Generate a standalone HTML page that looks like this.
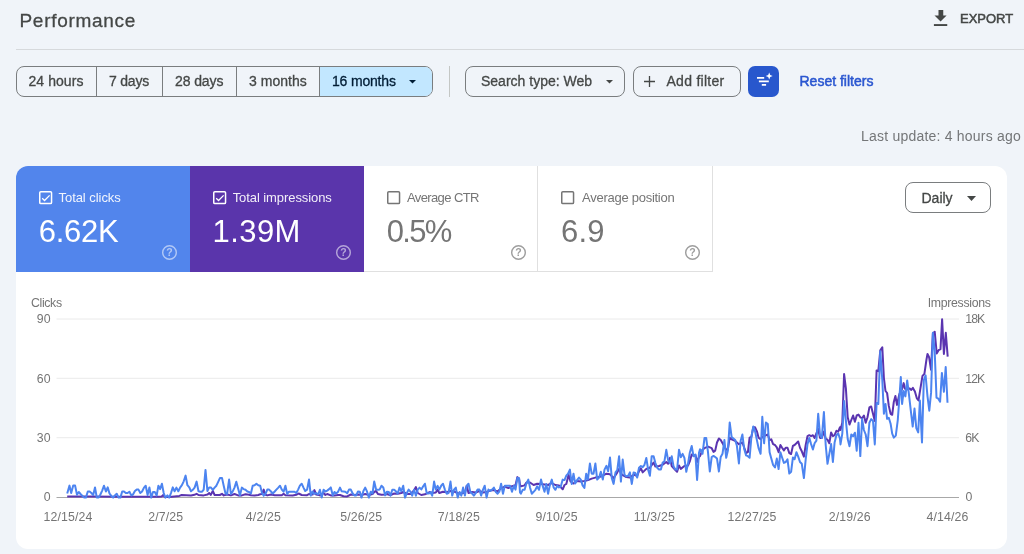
<!DOCTYPE html>
<html lang="en">
<head>
<meta charset="utf-8">
<title>Performance</title>
<style>
*{box-sizing:border-box;margin:0;padding:0}
html,body{width:1024px;height:554px;overflow:hidden}
body{background:#f0f4f9;will-change:transform;font-family:"Liberation Sans",sans-serif;color:#444746;position:relative}
.abs{position:absolute}
.title{left:19.500px;top:9px;font-size:19px;line-height:24px;color:#444746;letter-spacing:0.7px}
.export{left:960px;top:10px;font-size:13px;line-height:18px;color:#444746;letter-spacing:0px}
.hr{left:15.500px;top:49px;width:1008px;height:1px;background:#d6d9dc}
.seg{left:15.500px;top:66px;height:31px;width:417.800px;border:1px solid #7a7d7f;border-radius:8px;overflow:hidden;display:flex;background:#f0f4f9}
.seg div{height:100%;border-right:1px solid #7a7d7f;font-size:14px;line-height:29px;text-align:center;color:#444746;white-space:nowrap}
.seg div:last-child{border-right:none;background:#c2e7ff;color:#001d35}
.btn{top:66px;height:31px;border:1px solid #7a7d7f;border-radius:8px;font-size:14px;line-height:29px;color:#444746;white-space:nowrap}
.vsep{left:449px;top:66px;width:1px;height:31px;background:#c4c7c5}
.bluebtn{left:748px;top:66px;width:31.400px;height:31px;border-radius:7px;background:#2857cd}
.reset{left:799.5px;top:72px;font-size:14px;line-height:18px;color:#2a56d0}
.last{right:3px;top:126.500px;font-size:14px;line-height:18px;color:#747678;white-space:nowrap;letter-spacing:0.21px}
.card{left:15.500px;top:166px;width:991.200px;height:383px;background:#fff;border-radius:12px;overflow:hidden}
.tile{top:0;width:174.200px;height:106px}
.tile .lbl{position:absolute;left:43px;top:24px;font-size:13px;line-height:16px;white-space:nowrap}
.tile .val{position:absolute;left:22.800px;top:48px;font-size:31px;line-height:36px;white-space:nowrap;letter-spacing:-0.6px}
.tile .cb{position:absolute;left:23.300px;top:24.800px}
.t1{left:0;background:#5285ec;color:#fff}
.t1 .lbl,.t2 .lbl{opacity:.92}
.t2{left:174.200px;background:#5a35ab;color:#fff}
.t3{left:348.400px;color:#757575;border-right:1px solid #e0e0e0;border-bottom:1px solid #e0e0e0}
.t4{left:522.600px;width:175.200px;color:#757575;border-right:1px solid #e0e0e0;border-bottom:1px solid #e0e0e0}
.help{position:absolute;left:145.800px;top:77.800px;opacity:.55}
.t3 .help,.t4 .help{opacity:1;color:#9e9e9e}
.daily{left:889px;top:16px;width:86px;height:31px;padding-top:0.700px;border:1px solid #7a7d7f;border-radius:8px;font-size:14px;line-height:29px;color:#444746;padding-left:16px}
svg text{font-family:"Liberation Sans",sans-serif}
.title,.seg div,.btn,.daily{-webkit-text-stroke:0.3px currentColor}
.export,.reset{-webkit-text-stroke:0.5px currentColor}
</style>
</head>
<body>
<div class="abs title">Performance</div>
<svg class="abs" style="left:932px;top:8px" width="18" height="20" viewBox="0 0 18 20"><path d="M6.500 2h4.750v5.600h3.350L8.550 13.500 2.500 7.600h4z" fill="#444746"/><rect x="1.900" y="16.100" width="13.350" height="1.900" fill="#444746"/></svg>
<div class="abs export">EXPORT</div>
<div class="abs hr"></div>

<div class="abs seg">
  <div style="width:80px;letter-spacing:0.08px">24 hours</div>
  <div style="width:66px;letter-spacing:-0.2px">7 days</div>
  <div style="width:74.300px;letter-spacing:-0.1px">28 days</div>
  <div style="width:83.200px;letter-spacing:0.05px">3 months</div>
  <div style="width:112.300px;text-align:left;padding-left:12px;letter-spacing:-0.18px">16 months</div>
</div>
<svg class="abs" style="left:409.400px;top:79.500px" width="7" height="4" viewBox="0 0 7 4"><path d="M0 0h7L3.500 3.600z" fill="#001d35"/></svg>
<div class="abs vsep"></div>
<div class="abs btn" style="left:464.500px;width:160.500px;padding-left:15.500px">Search type: Web</div>
<svg class="abs" style="left:605.500px;top:79.500px" width="7" height="4" viewBox="0 0 7 4"><path d="M0 0h7L3.500 3.600z" fill="#444746"/></svg>
<div class="abs btn" style="left:633px;width:107.500px;padding-left:32.500px;letter-spacing:0.27px">Add filter</div>
<svg class="abs" style="left:643px;top:75px" width="13" height="13" viewBox="0 0 13 13"><path d="M6.500 1v11M1 6.500h11" stroke="#444746" stroke-width="1.300" fill="none"/></svg>
<div class="abs bluebtn"></div>
<svg class="abs" style="left:748px;top:66px" width="31" height="31" viewBox="0 0 31 31"><path d="M9 11.800h7.200M10.900 15.400h9.900M13.800 18.800h4.300" stroke="#fff" stroke-width="1.700" fill="none"/><path d="M21.200 6.600l1 2.500 2.500 1-2.500 1-1 2.500-1-2.500-2.500-1 2.500-1z" fill="#fff"/></svg>
<div class="abs reset">Reset filters</div>
<div class="abs last">Last update: 4 hours ago</div>

<div class="abs card">
  <div class="abs tile t1"><svg class="cb" width="14" height="14" viewBox="0 0 14 14"><rect x=".75" y=".75" width="11.800" height="11.800" rx="1.100" fill="none" stroke="currentColor" stroke-width="1.500"/><path d="M3.200 7.300l2.350 2.200 5.050-5.100" fill="none" stroke="currentColor" stroke-width="1.300"/></svg><span class="lbl" style="letter-spacing:-0.05px">Total clicks</span><span class="val" style="letter-spacing:-0.3px;left:23.300px">6.62K</span><svg class="help" width="17" height="17" viewBox="0 0 17 17"><circle cx="8.500" cy="8.500" r="6.800" fill="none" stroke="currentColor" stroke-width="1.400"/><text x="8.500" y="12.300" text-anchor="middle" font-size="10.500" font-weight="bold" fill="currentColor">?</text></svg></div>
  <div class="abs tile t2"><svg class="cb" width="14" height="14" viewBox="0 0 14 14"><rect x=".75" y=".75" width="11.800" height="11.800" rx="1.100" fill="none" stroke="currentColor" stroke-width="1.500"/><path d="M3.200 7.300l2.350 2.200 5.050-5.100" fill="none" stroke="currentColor" stroke-width="1.300"/></svg><span class="lbl" style="letter-spacing:-0.08px">Total impressions</span><span class="val" style="letter-spacing:0.45px">1.39M</span><svg class="help" width="17" height="17" viewBox="0 0 17 17"><circle cx="8.500" cy="8.500" r="6.800" fill="none" stroke="currentColor" stroke-width="1.400"/><text x="8.500" y="12.300" text-anchor="middle" font-size="10.500" font-weight="bold" fill="currentColor">?</text></svg></div>
  <div class="abs tile t3"><svg class="cb" width="14" height="14" viewBox="0 0 14 14"><rect x=".75" y=".75" width="11.800" height="11.800" rx="1.100" fill="none" stroke="currentColor" stroke-width="1.500"/></svg><span class="lbl" style="letter-spacing:-0.6px">Average CTR</span><span class="val" style="letter-spacing:-1.7px">0.5%</span><svg class="help" width="17" height="17" viewBox="0 0 17 17"><circle cx="8.500" cy="8.500" r="6.800" fill="none" stroke="currentColor" stroke-width="1.400"/><text x="8.500" y="12.300" text-anchor="middle" font-size="10.500" font-weight="bold" fill="currentColor">?</text></svg></div>
  <div class="abs tile t4"><svg class="cb" width="14" height="14" viewBox="0 0 14 14"><rect x=".75" y=".75" width="11.800" height="11.800" rx="1.100" fill="none" stroke="currentColor" stroke-width="1.500"/></svg><span class="lbl" style="letter-spacing:-0.27px;left:44px">Average position</span><span class="val" style="letter-spacing:0.3px">6.9</span><svg class="help" width="17" height="17" viewBox="0 0 17 17"><circle cx="8.500" cy="8.500" r="6.800" fill="none" stroke="currentColor" stroke-width="1.400"/><text x="8.500" y="12.300" text-anchor="middle" font-size="10.500" font-weight="bold" fill="currentColor">?</text></svg></div>
  <div class="abs daily">Daily</div>
  <svg class="abs" style="left:951px;top:29.500px" width="9" height="5" viewBox="0 0 9 5"><path d="M0 0h9L4.500 5z" fill="#444746"/></svg>
  <svg id="chart" class="abs" style="left:0.500px;top:106px" width="991" height="277" viewBox="16 272 991 277">
    <g stroke="#eaeaea" stroke-width="1">
      <line x1="56.500" x2="959" y1="319" y2="319"/>
      <line x1="56.500" x2="959" y1="378.300" y2="378.300"/>
      <line x1="56.500" x2="959" y1="437.700" y2="437.700"/>
    </g>
    <line x1="56.500" x2="959" y1="497.500" y2="497.500" stroke="#a8a8a8" stroke-width="1"/>
    <g font-size="12.300" fill="#757575">
      <text x="31" y="306.800" letter-spacing="-0.35">Clicks</text>
      <text x="990.700" y="306.800" text-anchor="end" letter-spacing="-0.3">Impressions</text>
      <g text-anchor="end">
        <text x="50.500" y="323.200">90</text>
        <text x="50.500" y="382.500">60</text>
        <text x="50.500" y="441.900">30</text>
        <text x="50.500" y="501.200">0</text>
      </g>
      <text x="965.200" y="323.200" letter-spacing="-0.9">18K</text>
      <text x="965.200" y="382.500" letter-spacing="-0.9">12K</text>
      <text x="965.200" y="441.900" letter-spacing="-0.9">6K</text>
      <text x="965.500" y="501.200">0</text>
      <g text-anchor="middle" letter-spacing="0.15">
        <text x="68" y="521.300">12/15/24</text>
        <text x="165.700" y="521.300">2/7/25</text>
        <text x="263.400" y="521.300">4/2/25</text>
        <text x="361.200" y="521.300">5/26/25</text>
        <text x="458.900" y="521.300">7/18/25</text>
        <text x="556.600" y="521.300">9/10/25</text>
        <text x="654.300" y="521.300">11/3/25</text>
        <text x="752" y="521.300">12/27/25</text>
        <text x="849.800" y="521.300">2/19/26</text>
        <text x="947.500" y="521.300">4/14/26</text>
      </g>
    </g>
    <polyline fill="none" stroke="#5a34b0" stroke-width="2" stroke-linejoin="round" stroke-linecap="butt" points="67.2,496.6 89.3,496.6 118.6,496.7 158.4,496.7 161.7,496.4 163.2,495.0 164.6,496.9 169.5,496.9 179.3,495.9 181.7,495.0 191.0,495.4 194.4,494.8 196.6,493.8 198.5,495.0 203.7,495.4 207.6,494.5 209.2,493.0 210.7,495.0 212.8,491.0 214.6,495.0 219.8,495.0 222.0,493.8 223.7,495.4 227.1,494.5 230.9,495.4 234.5,494.0 238.1,495.4 241.8,495.4 245.5,494.3 249.1,494.7 250.9,495.2 254.6,495.4 258.3,495.0 260.2,494.3 262.0,494.0 263.7,489.6 264.9,494.5 267.3,495.4 271.0,494.5 274.7,495.2 281.8,495.2 283.6,493.8 285.4,495.2 292.7,495.4 296.3,494.8 298.6,493.5 301.7,495.0 307.1,495.2 309.0,494.0 312.6,494.5 314.4,490.1 316.2,494.5 319.9,495.4 323.6,493.0 325.4,495.0 327.2,494.0 330.8,495.4 334.5,495.6 338.1,495.0 340.0,495.0 343.5,496.2 347.2,496.4 350.8,494.5 354.4,495.0 358.0,494.5 361.5,495.0 365.2,494.0 368.9,495.0 372.5,494.0 374.2,492.0 376.1,491.0 377.9,494.0 381.5,494.8 385.2,494.5 386.9,494.0 390.5,495.2 394.2,493.5 397.7,493.7 401.3,493.0 403.2,492.0 406.9,494.0 410.4,494.0 414.0,490.6 415.9,487.1 417.7,493.0 421.3,495.0 424.9,494.3 430.0,492.0 432.2,493.0 435.8,492.5 437.6,489.6 439.3,493.0 443.0,491.7 446.7,492.3 450.5,491.0 454.0,491.5 457.7,493.0 461.3,493.5 464.9,492.5 466.7,485.7 468.5,493.0 472.1,492.0 475.7,492.5 479.4,491.0 483.0,492.5 486.6,492.0 490.3,490.6 493.9,490.1 497.6,491.5 501.1,488.1 504.8,486.6 508.4,488.1 512.0,486.2 515.5,485.2 517.4,477.1 519.1,478.8 520.0,484.7 520.9,486.4 524.6,485.4 526.4,482.5 530.0,482.5 533.6,485.0 537.1,483.7 541.0,484.0 544.5,484.5 548.1,485.0 551.8,483.0 555.4,485.0 559.0,485.4 562.7,489.3 564.5,485.0 566.3,484.0 568.6,474.7 570.5,481.5 573.5,483.5 577.1,481.0 580.8,481.5 584.4,481.0 588.1,480.1 591.7,478.6 595.4,477.6 599.1,477.1 602.8,475.7 606.4,473.7 610.0,474.2 613.6,478.1 617.3,472.4 619.1,468.9 620.9,473.5 622.7,475.2 626.3,477.0 629.9,477.5 633.6,474.7 637.2,475.8 639.0,471.2 640.9,468.3 642.7,472.4 646.3,468.9 649.9,467.7 653.6,462.5 655.4,466.6 659.0,466.0 662.7,464.8 666.3,462.0 668.1,463.7 670.0,457.9 671.7,466.0 675.4,470.0 677.1,471.8 679.0,465.4 680.8,468.9 684.4,466.0 688.1,465.4 689.8,461.4 691.7,454.5 693.5,455.6 695.4,455.0 697.1,462.0 699.0,456.8 700.0,456.2 702.5,449.8 704.5,448.2 708.0,446.6 711.7,448.2 713.5,451.9 715.2,450.6 717.0,442.5 718.9,438.5 720.7,440.1 724.4,446.6 726.2,449.8 727.9,449.0 729.7,437.7 731.6,439.3 735.2,440.9 738.9,444.2 742.4,442.5 746.1,453.0 747.9,452.2 749.6,437.7 751.4,436.9 753.3,427.3 755.1,427.3 756.9,431.3 758.6,437.7 760.6,439.3 762.3,436.9 765.9,435.3 767.8,434.5 769.6,440.1 771.3,439.3 773.1,444.2 775.0,445.0 776.8,447.4 778.6,452.2 780.4,445.0 782.1,447.7 783.9,450.4 785.7,447.7 787.5,447.7 789.3,453.1 791.1,454.0 792.9,445.9 794.6,445.0 796.4,443.3 798.2,441.5 800.0,447.7 801.8,451.3 803.9,456.6 805.7,445.0 807.5,436.1 809.3,435.2 811.1,436.1 812.9,435.2 814.6,437.9 816.4,433.4 818.2,429.0 820.0,437.9 821.8,437.9 823.9,431.6 825.7,438.8 827.5,439.7 829.3,443.3 831.1,432.5 832.9,436.1 834.6,435.2 836.4,430.8 838.2,431.6 840.0,427.2 840.5,430.0 842.3,422.7 844.1,374.0 845.9,388.5 847.7,417.3 849.5,424.6 851.3,420.0 853.1,415.5 854.9,421.8 856.7,415.5 858.5,414.6 860.3,417.3 862.1,418.2 863.9,415.5 865.7,422.7 867.5,417.3 869.4,407.4 871.2,406.5 873.0,413.7 874.8,420.9 876.6,370.4 878.3,371.2 880.3,350.3 882.3,347.3 883.9,378.1 885.5,391.0 887.1,393.0 888.8,405.9 890.6,413.8 892.2,414.8 893.8,401.9 895.4,396.0 897.0,404.9 899.4,394.0 902.1,389.0 903.7,383.1 905.0,388.8 907.4,389.4 909.4,388.4 911.3,389.9 912.9,387.9 914.9,391.4 916.9,398.4 918.5,400.4 920.5,387.9 922.5,375.9 924.4,373.9 926.4,360.0 927.5,353.9 929.1,357.2 931.0,369.7 932.9,333.4 934.7,331.7 936.7,353.4 938.6,350.2 940.5,349.1 942.1,319.3 943.9,353.9 945.8,332.8 947.7,356.7"/>
    <polyline fill="none" stroke="#4c84f0" stroke-width="2" stroke-linejoin="round" stroke-linecap="butt" points="67.2,493.5 69.5,485.6 71.2,493.0 73.2,485.6 75.1,485.6 77.0,494.8 78.8,492.0 80.5,494.0 82.5,495.9 84.2,497.6 85.9,497.6 87.8,491.5 89.6,491.5 91.4,493.0 93.2,495.0 95.0,487.4 96.8,497.6 98.6,497.6 100.4,494.5 102.2,490.6 104.0,485.7 105.9,491.5 107.7,487.4 109.5,493.5 111.3,495.9 113.1,497.6 114.9,495.4 116.7,493.7 118.6,497.6 120.4,497.6 122.2,491.5 124.0,491.5 125.8,493.0 127.6,493.0 129.4,491.7 131.3,495.4 133.0,494.5 134.9,491.0 136.7,489.6 138.5,489.6 140.3,493.0 142.1,491.5 144.0,487.6 145.7,485.7 147.6,495.0 149.4,487.4 151.2,497.6 153.0,492.0 154.8,492.0 156.7,495.4 158.4,485.7 160.1,489.1 161.9,483.7 163.7,493.0 165.4,497.6 167.4,495.4 169.2,497.6 171.0,493.0 172.8,487.4 174.6,491.3 176.4,487.6 178.3,491.3 180.1,487.6 181.9,485.2 183.7,481.3 185.6,475.6 187.4,485.2 189.3,487.4 191.0,491.3 192.8,489.8 194.6,487.6 196.6,481.6 198.5,491.3 200.3,491.7 202.1,491.7 203.7,489.6 205.5,469.9 207.4,491.0 209.2,487.4 211.0,487.6 212.8,489.8 214.6,487.6 216.4,485.7 218.2,481.8 220.0,477.9 222.0,477.9 223.7,485.7 225.5,493.5 227.1,494.0 229.1,479.6 230.9,494.0 232.6,491.7 234.5,487.6 236.3,481.8 238.1,488.6 240.0,495.4 241.8,487.6 243.6,489.1 245.5,489.8 247.4,491.5 249.1,492.0 250.9,493.5 252.7,485.7 254.6,485.2 256.4,483.7 258.3,485.2 260.2,485.7 262.0,493.0 263.7,495.6 265.6,493.5 267.3,489.6 269.1,489.6 271.0,491.5 272.7,493.5 274.7,491.5 276.4,489.6 278.3,487.6 280.0,485.7 281.8,489.6 283.6,491.7 285.4,485.7 287.2,494.0 289.0,491.7 290.8,491.7 292.7,491.7 294.5,491.7 296.3,493.0 298.1,489.6 299.9,485.7 301.7,483.7 303.5,487.6 305.2,491.0 307.1,489.6 309.0,479.6 310.8,495.6 312.6,491.5 314.4,494.0 316.2,493.0 318.1,494.5 319.9,489.8 321.7,497.6 323.6,489.8 325.4,491.5 327.2,490.6 329.1,489.1 330.8,487.4 332.8,495.6 334.5,492.0 336.2,493.5 338.1,491.7 340.0,487.6 341.7,491.3 343.5,491.5 345.3,491.7 347.2,493.3 349.0,489.6 350.8,489.6 352.7,493.5 354.4,495.4 356.2,495.4 358.0,491.5 359.8,491.7 361.5,497.6 363.4,491.0 365.2,487.6 367.1,491.7 368.9,497.6 370.7,491.7 372.5,493.5 374.2,481.6 376.1,489.6 377.9,489.8 379.7,489.4 381.5,485.7 383.3,487.4 385.2,495.4 386.9,491.7 388.8,492.0 390.5,495.6 392.3,489.8 394.2,489.8 395.9,491.3 397.7,493.5 399.5,487.6 401.3,491.3 403.2,485.7 405.0,497.6 406.9,493.0 408.6,489.6 410.4,491.7 412.2,495.6 414.0,489.8 415.9,495.6 417.7,489.6 419.6,487.6 421.3,489.4 423.2,486.2 424.9,483.7 426.7,493.0 428.4,493.5 430.0,493.0 430.4,492.0 432.2,495.6 434.1,481.6 435.8,489.6 437.6,485.9 439.3,489.6 441.2,485.7 443.0,483.7 444.9,489.6 446.7,493.7 448.5,493.0 450.5,481.6 452.2,495.6 454.0,489.6 455.8,487.6 457.7,497.6 459.6,492.0 461.3,495.6 463.1,487.6 464.9,495.6 466.7,485.9 468.5,483.7 470.3,491.7 472.1,493.5 473.9,495.6 475.7,493.0 477.6,489.6 479.4,489.6 481.1,495.6 483.0,489.6 484.7,485.7 486.6,497.6 488.4,489.6 490.3,491.0 492.1,489.6 493.9,487.6 495.7,491.7 497.6,493.7 499.3,491.7 501.1,483.7 503.0,493.7 504.8,485.7 506.6,485.7 508.4,485.7 510.1,485.7 512.0,491.7 513.8,485.7 515.5,489.6 517.4,477.9 519.1,478.3 520.0,492.5 520.9,493.7 522.7,489.8 524.6,489.8 526.4,483.5 528.3,479.6 530.0,487.4 531.8,493.7 533.6,491.8 535.4,489.8 537.1,486.4 539.0,489.8 541.0,479.6 542.7,485.9 544.5,491.8 546.3,484.0 548.1,493.7 549.8,485.4 551.8,479.6 553.6,487.4 555.4,489.8 557.2,485.9 559.0,487.4 560.8,486.4 562.7,479.6 564.5,480.1 566.3,475.7 568.1,473.7 569.9,469.6 571.7,484.0 573.5,473.7 575.2,483.5 577.1,480.1 579.0,477.6 580.8,479.6 582.6,485.4 584.4,487.9 586.2,473.7 587.9,479.6 589.9,463.5 591.7,473.7 593.5,473.7 595.4,463.5 597.2,479.6 599.1,477.6 600.8,471.8 602.8,479.6 604.5,469.6 606.4,465.9 608.1,471.3 610.0,457.6 611.8,478.1 613.6,483.9 615.5,472.4 617.3,470.0 619.1,456.2 620.9,481.6 622.7,459.6 624.5,474.7 626.3,476.4 628.2,475.8 629.9,472.4 631.8,483.9 633.6,472.4 635.3,472.9 637.2,477.5 639.0,467.7 640.9,466.0 642.7,467.2 644.5,464.8 646.3,457.9 648.2,470.0 649.9,475.8 651.7,456.2 653.6,456.2 655.4,463.1 657.2,467.7 659.0,469.5 660.9,469.5 662.7,462.5 664.4,461.4 666.3,449.8 668.1,460.2 670.0,463.1 671.7,456.2 673.6,466.6 675.4,469.5 677.1,469.5 679.0,449.8 680.8,457.3 682.6,453.9 684.4,457.9 686.3,471.8 688.1,463.1 689.8,452.7 691.7,446.0 693.5,456.2 695.4,454.5 697.1,479.9 699.0,452.7 700.0,449.3 700.8,449.8 702.5,453.8 704.5,438.0 706.2,438.0 708.0,452.2 709.8,471.5 711.7,457.0 713.5,455.9 715.2,457.0 717.0,458.6 718.9,471.5 720.7,457.0 722.5,453.8 724.4,440.1 726.2,457.8 727.9,450.6 729.7,422.5 731.6,436.9 733.4,438.5 735.2,440.1 736.9,445.8 738.9,463.4 740.6,440.9 742.4,434.5 744.2,449.0 746.1,455.4 747.9,456.2 749.6,457.8 751.4,436.9 753.3,426.5 755.1,431.3 756.9,440.1 758.6,448.2 760.6,453.8 762.3,416.8 764.1,443.3 765.9,422.5 767.8,424.1 769.6,452.2 771.3,458.6 773.1,465.0 775.0,467.5 776.8,458.6 778.6,469.1 780.4,452.2 782.1,457.5 783.9,462.9 785.7,462.0 787.5,459.3 789.3,473.6 791.1,471.8 792.9,457.5 794.6,459.3 796.4,452.2 798.2,456.6 800.0,462.0 801.8,463.8 803.9,478.1 805.7,459.3 807.5,444.1 809.3,437.9 811.1,444.1 812.9,449.5 814.6,443.3 816.4,440.6 818.2,413.8 820.0,435.2 821.8,437.9 823.9,412.0 825.7,445.0 827.5,463.8 829.3,454.0 831.1,444.1 832.9,462.0 834.6,442.4 836.4,435.2 838.2,433.4 840.0,438.8 840.5,444.4 842.3,433.6 844.1,401.1 845.9,420.9 847.7,439.0 849.5,446.2 851.3,434.5 853.1,436.3 854.9,432.7 856.7,450.7 858.5,422.7 860.3,456.1 862.1,419.1 863.9,430.0 865.7,434.5 867.5,446.2 869.4,422.7 871.2,419.1 873.0,420.9 874.8,444.4 876.6,402.9 878.3,403.9 880.3,351.3 882.3,380.1 883.9,413.8 885.5,403.9 887.1,418.8 888.8,417.8 890.6,423.7 892.2,433.7 893.8,437.6 895.8,435.6 897.8,419.8 899.4,397.9 900.8,377.1 902.1,403.9 903.7,391.0 905.4,396.4 907.2,380.4 909.0,394.9 910.8,410.7 912.7,426.6 914.5,408.6 916.3,428.1 918.2,432.4 919.9,400.6 922.0,442.5 923.8,380.4 925.6,375.4 927.5,396.3 929.3,410.7 931.1,392.4 932.9,332.8 934.7,351.4 936.5,397.7 938.3,398.7 940.1,401.7 941.9,372.9 943.9,391.8 945.7,367.0 947.5,402.7"/>
  </svg>
</div>
</body>
</html>
